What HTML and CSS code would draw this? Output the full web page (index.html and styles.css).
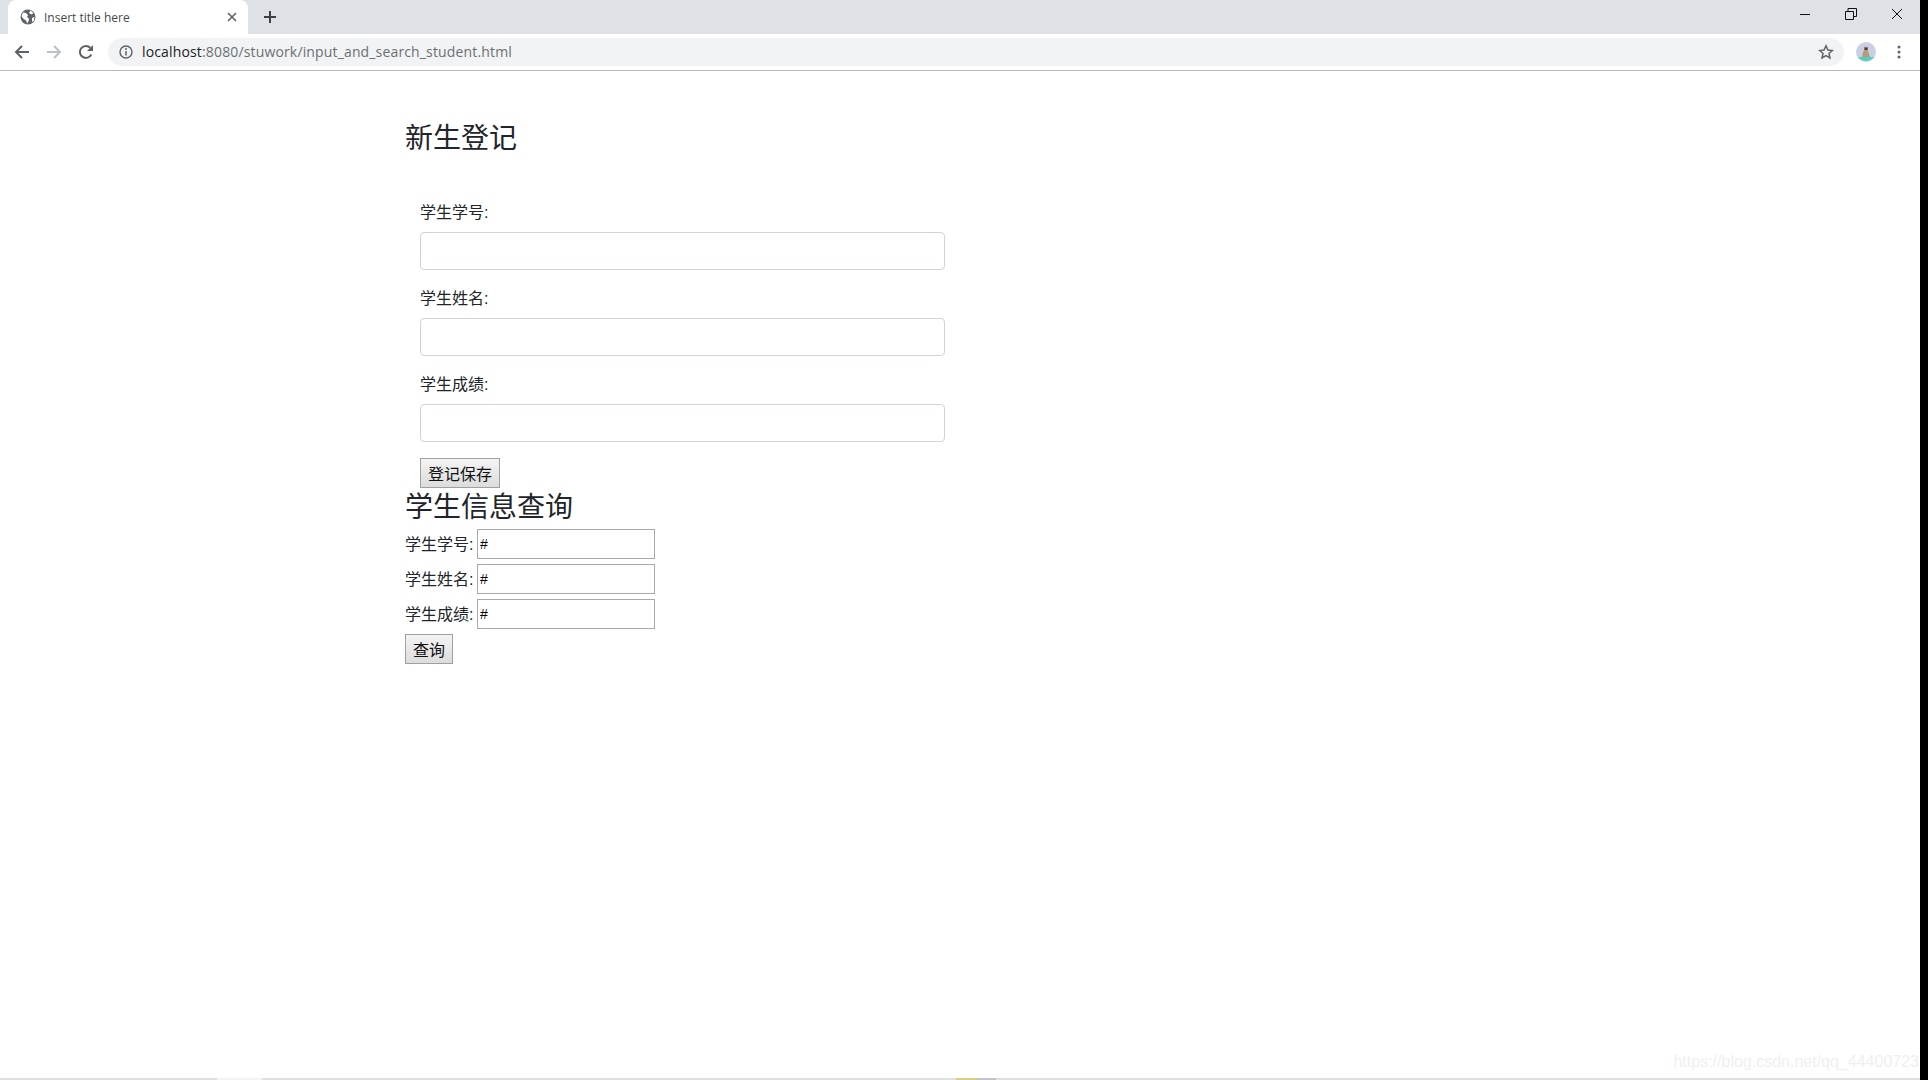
FILE: index.html

```html
<!DOCTYPE html>
<html lang="zh-CN">
<head>
  <meta charset="UTF-8" />
  <meta name="viewport" content="width=device-width, initial-scale=1.0" />
  <title>Insert title here</title>
  <link rel="stylesheet" href="styles.css">
</head>
<body>
  <div class="screen">
    <div class="window">
      <div class="tabstrip">
        <div class="tab">
          <svg class="favicon" width="16" height="16" viewBox="0 0 16 16">
            <circle cx="8" cy="8" r="7.5" fill="#5f6368"/>
            <path d="M3 3.500l3 .5 2 2-1 2 2 1.500-.5 3-1.500 2-1-3-2.500-1.500-2-3zM10.500 1.500l3 2.500-2 1.500-2.500-1.500zM12 9l2.500-1-.5 3.500-2 1.500z" fill="#fff"/>
          </svg>
          <span class="tab-title">Insert title here</span>
          <svg class="tab-close" width="10" height="10" viewBox="0 0 10 10">
            <path d="M1 1l8 8M9 1l-8 8" stroke="#5f6368" stroke-width="1.600"/>
          </svg>
        </div>
        <svg class="new-tab" width="14" height="14" viewBox="0 0 14 14">
          <path d="M7 1v12M1 7h12" stroke="#3c4043" stroke-width="2"/>
        </svg>
        <div class="win-controls">
          <svg width="12" height="12" viewBox="0 0 12 12"><path d="M1 6.500h10" stroke="#111" stroke-width="1"/></svg>
          <svg width="12" height="12" viewBox="0 0 12 12"><path d="M.5 3.500h8v8h-8zM3 3.500v-3h8.500v8h-3" fill="none" stroke="#111" stroke-width="1"/></svg>
          <svg width="12" height="12" viewBox="0 0 12 12"><path d="M1 1l10 10M11 1L1 11" stroke="#111" stroke-width="1"/></svg>
        </div>
      </div>

      <div class="toolbar">
        <svg class="nav-icon" width="16" height="16" viewBox="0 0 16 16">
          <path d="M15 8H2M8 2L2 8l6 6" fill="none" stroke="#5f6368" stroke-width="2"/>
        </svg>
        <svg class="nav-icon" width="16" height="16" viewBox="0 0 16 16">
          <path d="M1 8h13M8 2l6 6-6 6" fill="none" stroke="#bdc1c6" stroke-width="2"/>
        </svg>
        <svg class="nav-icon" width="16" height="16" viewBox="0 0 16 16">
          <path d="M13.300 10.500A6 6 0 1 1 12.300 3.800" fill="none" stroke="#5f6368" stroke-width="2"/>
          <path d="M15 1v6H9z" fill="#5f6368"/>
        </svg>
        <div class="omnibox">
          <svg width="14" height="14" viewBox="0 0 14 14">
            <circle cx="7" cy="7" r="6" fill="none" stroke="#5f6368" stroke-width="1.400"/>
            <path d="M7 6v4.500" stroke="#5f6368" stroke-width="1.500"/>
            <circle cx="7" cy="4" r="1" fill="#5f6368"/>
          </svg>
          <span class="url"><span class="url-host">localhost</span>:8080/stuwork/input_and_search_student.html</span>
          <svg class="star" width="16" height="16" viewBox="0 0 16 16">
            <path d="M8 1.800l1.900 4.200 4.500.5-3.400 3 1 4.500L8 11.700 4 14l1-4.500-3.400-3 4.500-.5z" fill="none" stroke="#5f6368" stroke-width="1.500"/>
          </svg>
        </div>
        <svg class="avatar" width="20" height="20" viewBox="0 0 20 20">
          <circle cx="10" cy="10" r="10" fill="#c9d0e6"/>
          <path d="M2 15h16a10 10 0 0 1-16 0z" fill="#4fd1c0"/>
          <path d="M6 15l1-5 1-1V4l1.500 1.500h1L12 4v5l2 6z" fill="#b99a78"/>
          <path d="M8.500 5.500h3v2.500h-3z" fill="#4a3f38"/>
        </svg>
        <svg class="menu" width="4" height="14" viewBox="0 0 4 14">
          <circle cx="2" cy="2" r="1.500" fill="#5f6368"/>
          <circle cx="2" cy="7" r="1.500" fill="#5f6368"/>
          <circle cx="2" cy="12" r="1.500" fill="#5f6368"/>
        </svg>
      </div>

      <div class="page">
        <h2 class="reg-title">新生登记</h2>
        <form class="reg-form">
          <div class="form-group">
            <label>学生学号:</label>
            <input class="form-control" type="text" />
          </div>
          <div class="form-group">
            <label>学生姓名:</label>
            <input class="form-control" type="text" />
          </div>
          <div class="form-group">
            <label>学生成绩:</label>
            <input class="form-control" type="text" />
          </div>
          <button class="btn" type="button">登记保存</button>
        </form>

        <h2 class="search-title">学生信息查询</h2>
        <form class="search-form">
          <div class="search-row">
            <label>学生学号:</label>
            <input class="search-input" type="text" value="#" />
          </div>
          <div class="search-row">
            <label>学生姓名:</label>
            <input class="search-input" type="text" value="#" />
          </div>
          <div class="search-row">
            <label>学生成绩:</label>
            <input class="search-input" type="text" value="#" />
          </div>
          <button class="btn" type="button">查询</button>
        </form>
        <div class="watermark">https://blog.csdn.net/qq_44400723</div>
      </div>

      <div class="bottom-edge">
        <span class="edge-light"></span>
        <span class="edge-yellow"></span>
        <span class="edge-gray"></span>
      </div>
    </div>
    <div class="right-edge"></div>
  </div>
</body>
</html>
```

FILE: styles.css

```css
* {
  box-sizing: border-box;
}
body {
  margin: 0;
  background: #fff;
  font-family: "Liberation Sans", "Noto Sans CJK SC", sans-serif;
  color: #212529;
  overflow: hidden;
}
.screen {
  display: flex;
  height: 1080px;
}
.window {
  width: 1920px;
  display: flex;
  flex-direction: column;
}
.right-edge {
  width: 8px;
  background: #000;
}

/* browser chrome */
.tabstrip {
  height: 34px;
  background: #dee1e6;
  display: flex;
  align-items: flex-end;
  padding-left: 8px;
}
.tab {
  width: 240px;
  height: 34px;
  background: #fff;
  border-radius: 8px 8px 0 0;
  display: flex;
  align-items: center;
  padding: 0 11px 0 12px;
}
.favicon {
  margin-right: 8px;
}
.tab-title {
  flex: 1;
  font: 12px "Open Sans", sans-serif;
  color: #45494e;
}
.new-tab {
  margin: 0 0 10px 15px;
}
.win-controls {
  margin-left: auto;
  align-self: flex-start;
  display: flex;
  gap: 34px;
  padding: 8px 17px 0 0;
}
.toolbar {
  height: 37px;
  background: #fff;
  border-bottom: 1px solid #b9b9b9;
  display: flex;
  align-items: center;
  padding-left: 14px;
}
.nav-icon {
  margin-right: 16px;
}
.omnibox {
  width: 1736px;
  height: 28px;
  margin-left: -2px;
  background: #f1f3f4;
  border-radius: 14px;
  display: flex;
  align-items: center;
  padding: 0 10px 0 11px;
}
.url {
  flex: 1;
  margin-left: 9px;
  padding-bottom: 1px;
  font: 14px "Open Sans", sans-serif;
  letter-spacing: 0.15px;
  color: #6b7075;
}
.url-host {
  color: #202124;
}
.avatar {
  margin-left: 12px;
}
.menu {
  margin-left: 21px;
}

/* page content */
.page {
  flex: 1;
  position: relative;
  padding: 51px 0 0 405px;
}
h2 {
  margin: 0;
  font-size: 28px;
  font-weight: 400;
  line-height: 34px;
}
.reg-title {
  margin-bottom: 44px;
}
.reg-form {
  width: 541px;
  padding-left: 15px;
}
.form-group {
  margin-bottom: 16px;
}
.form-group label {
  display: block;
  height: 24px;
  padding-top: 1px;
  line-height: 24px;
  margin-bottom: 8px;
  font-size: 16px;
}
.form-control {
  display: block;
  width: 525px;
  height: 38px;
  border: 1px solid #ced4da;
  border-radius: 4px;
  background: #fff;
}
.btn {
  display: block;
  height: 30px;
  padding: 0 7px;
  border: 1px solid #a0a0a0;
  border-radius: 0;
  background: linear-gradient(#f4f4f4, #dcdcdc);
  color: #111;
  font: 16px "Liberation Sans", "Noto Sans CJK SC", sans-serif;
}
.search-title {
  margin-top: 3px;
  margin-bottom: 4px;
}
.search-row {
  display: flex;
  align-items: center;
  margin-bottom: 5px;
  font-size: 16px;
}
.search-row label {
  width: 72px;
  padding-bottom: 2px;
}
.search-input {
  width: 178px;
  height: 30px;
  padding: 0 2px;
  border: 1px solid #a9a9a9;
  font: 14px "Liberation Sans", "Noto Sans CJK SC", sans-serif;
  color: #000;
}
.watermark {
  position: absolute;
  right: 1px;
  bottom: 6px;
  font-size: 16px;
  line-height: 20px;
  color: #efefef;
}
.bottom-edge {
  height: 2px;
  background: #dfdfdf;
  display: flex;
}
.edge-light {
  width: 45px;
  margin-left: 217px;
  background: #f3f3f3;
}
.edge-yellow {
  width: 21px;
  margin-left: 694px;
  background: #d9cf80;
}
.edge-gray {
  width: 19px;
  background: #c4c4c4;
}
```
